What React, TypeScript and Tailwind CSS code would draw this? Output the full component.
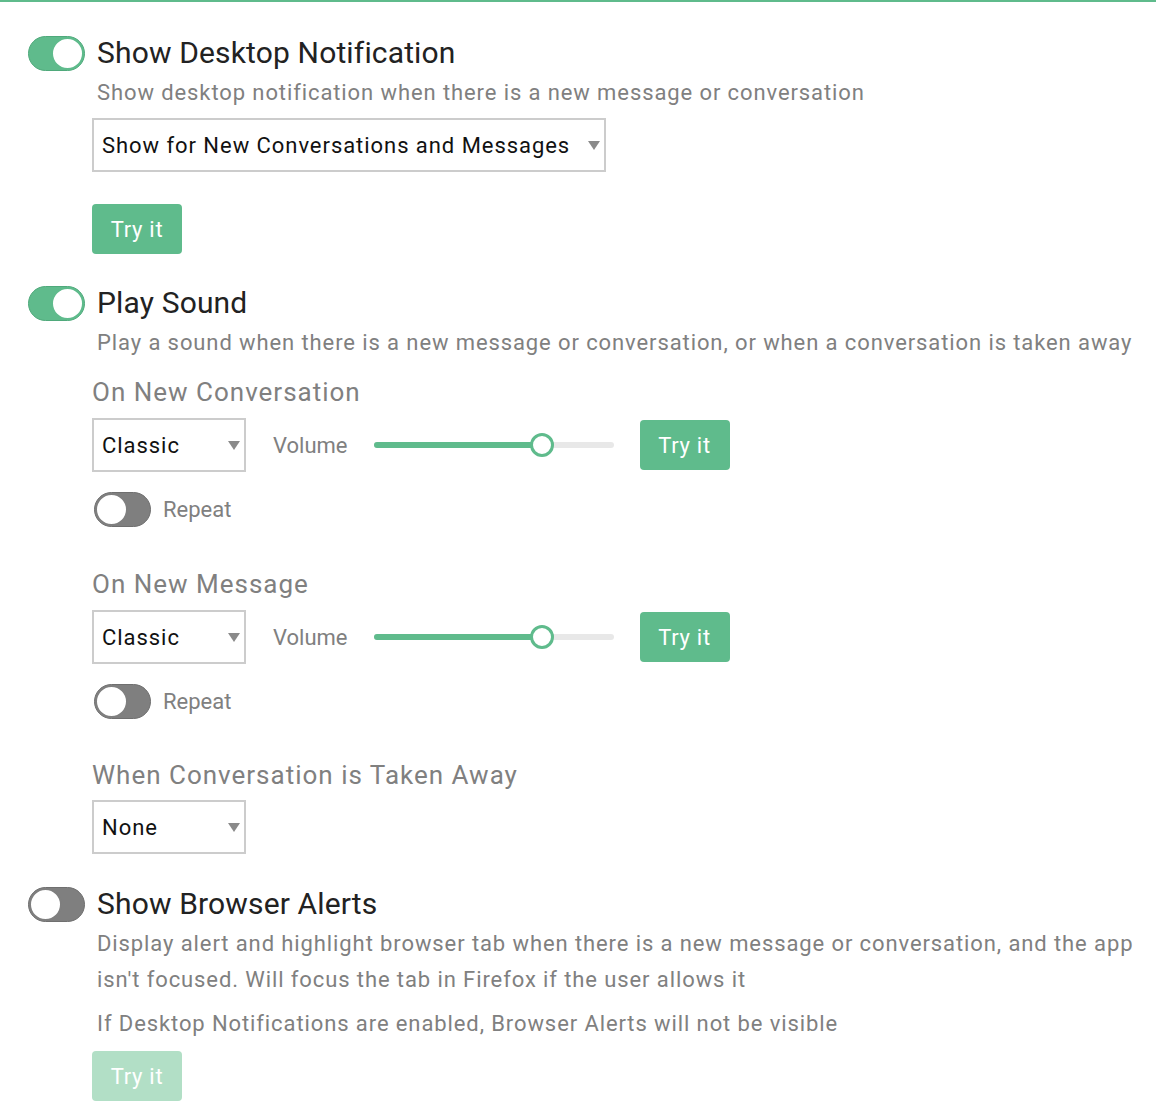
import React, { useState } from 'react';

const green = 'bg-[#5fbb8c]';

function Toggle({ on }: { on: boolean }) {
  return <div className={`w-[57px] h-[35px] rounded-full flex items-center flex-shrink-0 border ${on ? 'bg-[#5fbb8c] border-[#4fa97b] justify-end' : 'bg-[#7f7f7f] border-[#6f6f6f] justify-start'}`}>
      <div className={`w-[33px] h-[33px] rounded-full bg-white border-2 ${on ? 'border-[#5fbb8c]' : 'border-[#7f7f7f]'}`} />
    </div>;
}

function Select({ value, width }: { value: string; width: string }) {
  return <div className={`${width} h-[54px] border-2 border-[#cccccc] bg-white flex items-center justify-between pl-[8px] pr-[4px]`}>
      <span className="text-[22px] tracking-[0.95px] text-[#111]">{value}</span>
      <svg width="12" height="9" viewBox="0 0 12 9"><path d="M0 0 H12 L6 9 Z" fill="#8a8a8a" /></svg>
    </div>;
}

function TryIt({ disabled }: { disabled?: boolean }) {
  return <button className={`w-[90px] h-[50px] rounded-[4px] text-[22px] tracking-[0.7px] text-white flex items-center justify-center ${disabled ? 'bg-[#b2dfc6]' : green}`}>
      Try it
    </button>;
}

function Slider({ value }: { value: number }) {
  return <div className="relative w-[240px] h-[24px] flex items-center">
      <div className="w-full h-[6px] rounded-full bg-[#e8e8e8]">
        <div className="h-full rounded-full bg-[#5fbb8c]" style={{ width: `${value}%` }} />
      </div>
      <div className="absolute top-0 w-[24px] h-[24px] rounded-full bg-white border-[3px] border-[#5fbb8c]" style={{ left: `calc(${value}% - 12px)` }} />
    </div>;
}

function SoundBlock({ label }: { label: string }) {
  return <div>
      <div className="text-[26px] leading-[32px] tracking-[1px] text-[#808080]">{label}</div>
      <div className="mt-[10px] flex items-center">
        <Select value="Classic" width="w-[154px]" />
        <span className="ml-[27px] text-[22px] text-[#808080]">Volume</span>
        <div className="ml-[26px]"><Slider value={70} /></div>
        <div className="ml-[26px]"><TryIt /></div>
      </div>
      <div className="mt-[20px] flex items-center gap-[12px] ml-[2px]">
        <Toggle on={false} />
        <span className="text-[22px] text-[#808080]">Repeat</span>
      </div>
    </div>;
}

export default function App() {
  const [desktop] = useState(true);
  const [sound] = useState(true);
  const [alerts] = useState(false);
  return <div className="min-h-screen bg-white border-t-2 border-[#5fbb8c] pt-[33px] pl-[28px] pr-[10px] font-['Roboto',sans-serif]">
      {/* Desktop notification */}
      <div className="flex items-center gap-[12px] h-[36px]">
        <Toggle on={desktop} />
        <h2 className="text-[30px] leading-[36px] tracking-[0.15px] text-[#222]">Show Desktop Notification</h2>
      </div>
      <div className="ml-[64px]">
        <p className="pl-[5px] mt-[7px] text-[22px] leading-[30px] tracking-[0.9px] text-[#808080]">
          Show desktop notification when there is a new message or conversation
        </p>
        <div className="mt-[10px]">
          <Select value="Show for New Conversations and Messages" width="w-[514px]" />
        </div>
        <div className="mt-[32px]"><TryIt /></div>
      </div>

      {/* Play sound */}
      <div className="mt-[31px] flex items-center gap-[12px] h-[36px]">
        <Toggle on={sound} />
        <h2 className="text-[30px] leading-[36px] tracking-[0.15px] text-[#222]">Play Sound</h2>
      </div>
      <div className="ml-[64px]">
        <p className="pl-[5px] mt-[7px] text-[22px] leading-[30px] tracking-[0.9px] text-[#808080]">
          Play a sound when there is a new message or conversation, or when a conversation is taken away
        </p>
        <div className="mt-[18px]"><SoundBlock label="On New Conversation" /></div>
        <div className="mt-[41px]"><SoundBlock label="On New Message" /></div>
        <div className="mt-[40px] text-[26px] leading-[32px] tracking-[1px] text-[#808080]">When Conversation is Taken Away</div>
        <div className="mt-[9px]"><Select value="None" width="w-[154px]" /></div>
      </div>

      {/* Browser alerts */}
      <div className="mt-[32px] flex items-center gap-[12px] h-[36px]">
        <Toggle on={alerts} />
        <h2 className="text-[30px] leading-[36px] tracking-[0.15px] text-[#222]">Show Browser Alerts</h2>
      </div>
      <div className="ml-[64px]">
        <p className="pl-[5px] mt-[4px] text-[22px] leading-[36px] tracking-[0.9px] text-[#808080]">
          Display alert and highlight browser tab when there is a new message or conversation, and the app isn't focused. Will focus the tab in Firefox if the user allows it
        </p>
        <p className="pl-[5px] mt-[8px] text-[22px] leading-[36px] tracking-[0.9px] text-[#808080]">
          If Desktop Notifications are enabled, Browser Alerts will not be visible
        </p>
        <div className="mt-[9px] pb-[8px]"><TryIt disabled /></div>
      </div>
    </div>;
}
